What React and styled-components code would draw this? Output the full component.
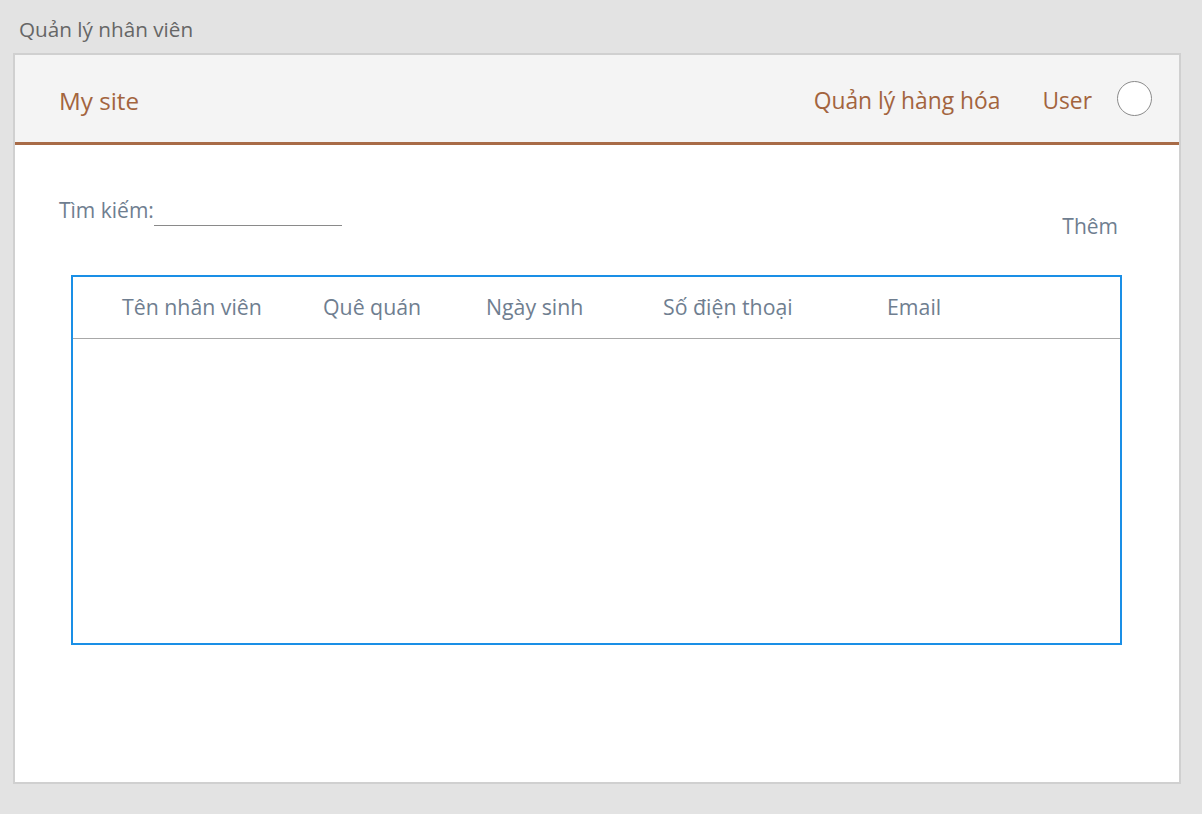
import React from "react";
import styled, { createGlobalStyle } from "styled-components";

const GlobalStyle = createGlobalStyle`
  html, body {
    margin: 0;
    padding: 0;
    background: #e3e3e3;
    font-family: "Open Sans", "Noto Sans", sans-serif;
  }
`;

const Page = styled.div`
  width: 1202px;
  height: 814px;
  box-sizing: border-box;
  padding: 14px 21px 0 13px;
`;

const PageTitle = styled.div`
  padding-left: 6px;
  height: 39px;
  font-size: 20.7px;
  line-height: 31px;
  color: #666666;
`;

const Frame = styled.div`
  height: 731px;
  box-sizing: border-box;
  border: 2px solid #d0d0d0;
  background: #ffffff;
  display: flex;
  flex-direction: column;
`;

const Header = styled.header`
  height: 90px;
  box-sizing: border-box;
  background: #f4f4f4;
  border-bottom: 3px solid #a86b47;
  display: flex;
  align-items: center;
  padding: 4px 27px 0 44px;
`;

const Brand = styled.div`
  flex: 1;
  font-size: 24.2px;
  color: #a3643e;
`;

const NavLink = styled.a`
  font-size: 22.8px;
  color: #a3643e;
  margin-left: ${(p) => p.$gap || 0}px;
  text-decoration: none;
`;

const Avatar = styled.div`
  width: 33px;
  height: 33px;
  border-radius: 50%;
  border: 1px solid #8a8a8a;
  background: #fff;
  margin-left: 25px;
  margin-top: -4px;
`;

const Body = styled.main`
  padding: 51px 57px 0 44px;
`;

const Toolbar = styled.div`
  display: flex;
  justify-content: space-between;
  align-items: flex-start;
  height: 79px;
`;

const SearchLabel = styled.label`
  display: flex;
  align-items: flex-end;
  font-size: 21px;
  color: #6f7e90;
`;

const SearchInput = styled.span`
  display: inline-block;
  width: 188px;
  height: 20px;
  border-bottom: 1px solid #8a8a8a;
  margin-bottom: -2px;
`;

const AddButton = styled.a`
  margin-top: 16px;
  margin-right: 4px;
  font-size: 21px;
  color: #6f7e90;
`;

const Table = styled.div`
  margin-left: 12px;
  height: 370px;
  box-sizing: border-box;
  border: 2px solid #1a8fe6;
`;

const HeadRow = styled.div`
  display: grid;
  grid-template-columns: 201px 163px 177px 224px 1fr;
  padding-left: 49px;
  height: 62px;
  align-items: center;
  border-bottom: 1px solid #a8a8a8;
  box-sizing: border-box;
`;

const HeadCell = styled.div`
  font-size: 21.3px;
  color: #6f7e90;
  white-space: nowrap;
  margin-top: -2px;
`;

const columns = ["Tên nhân viên", "Quê quán", "Ngày sinh", "Số điện thoại", "Email"];

export default function App() {
  return (
    <>
      <GlobalStyle />
      <Page>
        <PageTitle>Quản lý nhân viên</PageTitle>
        <Frame>
          <Header>
            <Brand>My site</Brand>
            <NavLink>Quản lý hàng hóa</NavLink>
            <NavLink $gap={42}>User</NavLink>
            <Avatar />
          </Header>
          <Body>
            <Toolbar>
              <SearchLabel>
                Tìm kiếm:
                <SearchInput />
              </SearchLabel>
              <AddButton>Thêm</AddButton>
            </Toolbar>
            <Table>
              <HeadRow>
                {columns.map((c) => (
                  <HeadCell key={c}>{c}</HeadCell>
                ))}
              </HeadRow>
            </Table>
          </Body>
        </Frame>
      </Page>
    </>
  );
}
